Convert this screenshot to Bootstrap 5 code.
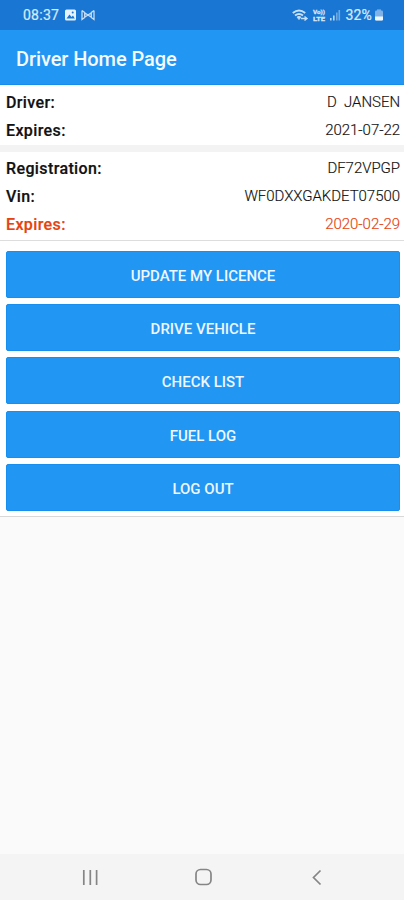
<!DOCTYPE html>
<html lang="en">
<head>
<meta charset="utf-8">
<meta name="viewport" content="width=device-width, initial-scale=1">
<title>Driver Home Page</title>
<link href="https://cdn.jsdelivr.net/npm/bootstrap@5.3.0/dist/css/bootstrap.min.css" rel="stylesheet">
<style>
body{font-family:Roboto,"Liberation Sans",sans-serif;background:#fafafa;color:#111;height:900px;overflow:hidden}
.status-bar{height:30px;background:#1976d2;color:#d9eafa;padding:0 20px 0 23px;font-size:14px;line-height:30px}
.clock{letter-spacing:.25px;-webkit-text-stroke:.2px}
.battery-level{letter-spacing:.2px;-webkit-text-stroke:.2px;margin:0 2px 0 3px}
.app-bar{height:55px;background:#2196f3;color:#f4faff;padding:4px 16px 0;border-bottom:1px solid #168cec}
.app-title{font-size:20px;font-weight:500;line-height:24px;letter-spacing:-.08px}
.panel{background:#fff}
.panel-gap{height:7px;background:#f3f3f3}
.info-row{height:28px;padding:0 4px 0 6px;line-height:28px}
.info-label{font-size:16px;font-weight:500;letter-spacing:.38px;-webkit-text-stroke:.2px}
.info-value{font-size:15px;font-weight:300;line-height:26px;letter-spacing:-.04px;-webkit-text-stroke:.15px}
.overdue{color:#e5430f}
.driver-panel{height:60px;padding-top:4px}
.vehicle-panel{height:89px;padding-top:3px;border-bottom:1px solid #ddd}
.action-panel{height:276px;padding:10px 4px 0 6px;gap:6.2px;border-bottom:1px solid #d8d8d8}
.btn-action{--bs-btn-color:#eef7ff;--bs-btn-bg:#2196f3;--bs-btn-border-color:#168ff0;--bs-btn-hover-bg:#1e88e5;--bs-btn-hover-color:#fff;--bs-btn-border-radius:2px;--bs-btn-padding-y:0;height:47px;font-size:15px;font-weight:500;line-height:48px}
.nav-keys{height:46px;background:#f4f4f4}
</style>
</head>
<body class="d-flex flex-column">
<div class="status-bar d-flex align-items-center justify-content-between">
  <div class="d-flex align-items-center">
    <span class="clock">08:37</span>
    <svg class="ms-1" width="34" height="14" viewBox="-2 0 34 14">
      <rect x="0" y="1.500" width="11" height="11" rx="1.500" fill="#e6f2fd"/>
      <path d="M1.500 10.500 4.500 6.500 6.500 9 8 7.500 9.800 10.500Z" fill="#1976d2"/><circle cx="7.700" cy="4.600" r="1" fill="#1976d2"/>
      <g fill="none" stroke="#c5def5" stroke-width="1.300"><path d="M17 2.500v9l3-2.200M29 2.500v9l-3-2.200M17 2.500l3 2.200M29 2.500l-3 2.200"/><path d="M19.700 5v4L23 7ZM26.300 5v4L23 7Z"/></g>
    </svg>
  </div>
  <div class="d-flex align-items-center">
    <svg width="50" height="16" viewBox="0 0 50 16">
      <g fill="none" stroke="#c9e1f7" stroke-width="1.900"><path d="M.8 6Q7 1 13.200 6M3 8.500q4-3.200 8 0M5.200 10.700q1.800-1.500 3.600 0"/><path d="M9 11.500h6M12.500 9.500l2.500 2-2.500 2" stroke-width="1.400"/></g>
      <path d="M5.500 11.200h3L7 13Z" fill="#d9eafa"/>
      <g fill="#d3e7f9" stroke="#d3e7f9" stroke-width=".3" font-family="Roboto" font-weight="700" font-size="6"><text x="21" y="7" textLength="12" lengthAdjust="spacingAndGlyphs">Vo))</text><text x="21" y="14" textLength="12" lengthAdjust="spacingAndGlyphs">LTE</text></g>
      <path d="M38 11h1.600v2.500H38zM41 8.500h1.600v5H41z" fill="#b9d8f5"/><path d="M44 5.500h1.600v8H44zM46.500 3h1.600v10.500h-1.600z" fill="#6fa9e3"/>
    </svg>
    <span class="battery-level">32%</span>
    <svg width="10" height="14" viewBox="0 0 10 14"><path d="M3 1.500h4v1.300H3z" fill="#8dbbea"/><rect x="1" y="2.500" width="8" height="10" rx="1.300" fill="#7eb2e8"/><path d="M1 8.500h8v2.700q0 1.300-1.300 1.300H2.300Q1 12.500 1 11.200Z" fill="#f0f8ff"/></svg>
  </div>
</div>
<header class="app-bar d-flex align-items-center"><h1 class="app-title m-0">Driver Home Page</h1></header>
<main class="flex-grow-1">
  <section class="panel driver-panel">
    <div class="info-row d-flex justify-content-between"><span class="info-label">Driver:</span><span class="info-value">D&nbsp; JANSEN</span></div>
    <div class="info-row d-flex justify-content-between"><span class="info-label">Expires:</span><span class="info-value">2021-07-22</span></div>
  </section>
  <div class="panel-gap"></div>
  <section class="panel vehicle-panel">
    <div class="info-row d-flex justify-content-between"><span class="info-label">Registration:</span><span class="info-value">DF72VPGP</span></div>
    <div class="info-row d-flex justify-content-between"><span class="info-label">Vin:</span><span class="info-value">WF0DXXGAKDET07500</span></div>
    <div class="info-row d-flex justify-content-between overdue"><span class="info-label">Expires:</span><span class="info-value">2020-02-29</span></div>
  </section>
  <section class="panel action-panel d-flex flex-column">
    <button type="button" class="btn btn-action">UPDATE MY LICENCE</button>
    <button type="button" class="btn btn-action">DRIVE VEHICLE</button>
    <button type="button" class="btn btn-action">CHECK LIST</button>
    <button type="button" class="btn btn-action">FUEL LOG</button>
    <button type="button" class="btn btn-action">LOG OUT</button>
  </section>
</main>
<nav class="nav-keys">
  <svg width="404" height="46" viewBox="0 0 404 46" fill="none" stroke="#858585" stroke-width="1.700">
    <path d="M83.800 16v15M90.300 16v15M96.600 16v15"/><rect x="196" y="15.500" width="15" height="15" rx="4.500"/><path d="M320.500 16.500 313.500 23.500 320.500 30.500"/>
  </svg>
</nav>
<script src="https://cdn.jsdelivr.net/npm/bootstrap@5.3.0/dist/js/bootstrap.bundle.min.js"></script>
</body>
</html>
